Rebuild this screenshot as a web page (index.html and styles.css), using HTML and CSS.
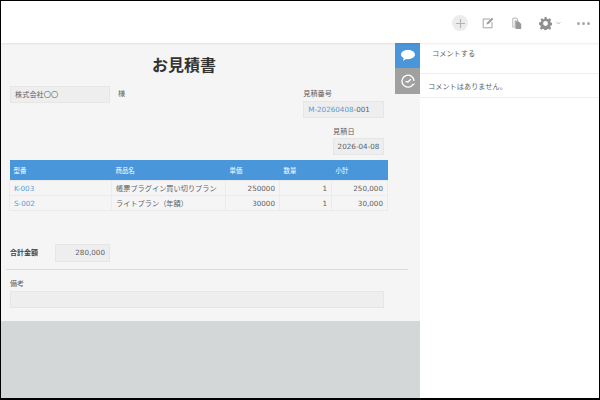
FILE: index.html
```html
<!DOCTYPE html>
<html lang="ja">
<head>
    <meta charset="UTF-8">
    <title>お見積書</title>
    <link rel="stylesheet" href="styles.css">
</head>
<body>
    <div class="frame">
        <header class="toolbar">
            <span class="icon add">
                <svg width="9" height="9" viewBox="0 0 10 10"><path d="M5 0v10M0 5h10" stroke="#b4b4b4" stroke-width="1.2" fill="none"/></svg>
            </span>
            <svg class="icon edit" width="12" height="12" viewBox="0 0 15 15" fill="none" stroke="#a0a0a0" stroke-width="1.2"><path d="M10 2.5H1.500v11h11V6"/><path d="M5.500 9.500l.6-2.400L12.300.9l1.800 1.800-6.200 6.200z" fill="#999" stroke="none"/></svg>
            <svg class="icon copy" width="10" height="13" viewBox="0 0 13 15"><path d="M1 .6h5.500l.8.8V4H4v8H1z" fill="none" stroke="#aaa" stroke-width="1.100"/><path d="M4.500 4.500h4l3.500 3.500v6.500H4.500z" fill="#999"/></svg>
            <svg class="icon gear" width="13" height="13" viewBox="0 0 24 24"><path d="M10 0h4l.6 3.300 2.300 1L19.700 2.400l2.800 2.800-1.900 2.800 1 2.300 3.400.7v4l-3.400.6-1 2.300 1.900 2.800-2.800 2.800-2.800-1.900-2.300 1-.6 3.400h-4l-.6-3.400-2.300-1-2.800 1.900-2.800-2.800 1.900-2.800-1-2.300L0 14v-4l3.400-.7 1-2.300L2.500 5.200l2.800-2.800 2.800 1.900 2.300-1zM12 7.500a4.500 4.500 0 1 0 0 9 4.500 4.500 0 0 0 0-9z" fill="#8f8f8f" fill-rule="evenodd"/></svg>
            <svg class="icon caret" width="5" height="4" viewBox="0 0 5 4"><path d="M.5 1l2 2 2-2" fill="none" stroke="#a8a8a8" stroke-width=".8"/></svg>
            <span class="icon more"><i></i><i></i><i></i></span>
        </header>
        <div class="main">
            <div class="left">
                <div class="sheet">
                    <div class="form">
                        <h1>お見積書</h1>
                        <div class="customer-row">
                            <div class="field customer">株式会社〇〇</div>
                            <span class="honorific">様</span>
                            <div class="quote-no">
                                <div class="label">見積番号</div>
                                <div class="field"><a>M-20260408</a>-001</div>
                            </div>
                        </div>
                        <div class="date-row">
                            <div class="label">見積日</div>
                            <div class="field date">2026-04-08</div>
                        </div>
                        <table class="items">
                            <colgroup>
                                <col class="c1"><col class="c2"><col class="c3"><col class="c4"><col class="c5">
                            </colgroup>
                            <thead>
                                <tr><th>型番</th><th>商品名</th><th>単価</th><th>数量</th><th>小計</th></tr>
                            </thead>
                            <tbody>
                                <tr><td><a>K-003</a></td><td>帳票プラグイン買い切りプラン</td><td class="num">250000</td><td class="num">1</td><td class="num">250,000</td></tr>
                                <tr><td><a>S-002</a></td><td>ライトプラン（年額）</td><td class="num">30000</td><td class="num">1</td><td class="num">30,000</td></tr>
                            </tbody>
                        </table>
                        <div class="total-row">
                            <span class="label bold">合計金額</span>
                            <div class="field total">280,000</div>
                        </div>
                        <hr>
                        <div class="label note-label">備考</div>
                        <div class="field note"></div>
                    </div>
                    <div class="tabs">
                        <div class="tab active">
                            <svg width="14" height="11" viewBox="0 0 14 11"><path d="M7 0c3.900 0 7 2 7 4.600S10.900 9.200 7 9.200c-.7 0-1.300 0-1.900-.2L2 11l.7-2.900C1 7.300 0 6 0 4.600 0 2 3.100 0 7 0z" fill="#fff"/></svg>
                        </div>
                        <div class="tab history">
                            <svg width="14" height="14" viewBox="0 0 14 14" fill="none" stroke="#fff" stroke-width="1.300"><path d="M12.300 10A6 6 0 1 1 13 7"/><path d="M4.500 7.500L7 8l3-3"/><path d="M13.500 9.500l-1 1.500-1.700-.8" stroke-width="1"/></svg>
                        </div>
                    </div>
                </div>
                <div class="below"></div>
            </div>
            <aside class="comments">
                <div class="comment-box">コメントする</div>
                <div class="comment-empty">コメントはありません。</div>
            </aside>
        </div>
    </div>
</body>
</html>
```

FILE: styles.css
```css
html, body {
    margin: 0;
    padding: 0;
}
body {
    font-family: "DejaVu Sans", "Noto Sans CJK JP", sans-serif;
    font-size: 7.2px;
    color: #5f5f5f;
    background: #fff;
}
.frame {
    box-sizing: border-box;
    width: 600px;
    height: 400px;
    border: 1px solid #000;
    border-bottom-width: 2px;
    display: flex;
    flex-direction: column;
    overflow: hidden;
}
.toolbar {
    flex: none;
    height: 42px;
    display: flex;
    align-items: center;
    padding-top: 2px;
    box-sizing: border-box;
    padding-left: 451px;
    box-shadow: 0 1px 2px rgba(0, 0, 0, 0.08);
    position: relative;
}
.icon {
    flex: none;
}
.add {
    width: 16px;
    height: 16px;
    border-radius: 50%;
    background: #ececec;
    display: flex;
    align-items: center;
    justify-content: center;
}
.edit {
    margin-left: 14px;
}
.copy {
    margin-left: 18px;
}
.gear {
    margin-left: 17px;
}
.caret {
    margin-left: 4px;
}
.more {
    margin-left: 16px;
    display: flex;
    gap: 2px;
}
.more i {
    width: 3px;
    height: 3px;
    border-radius: 50%;
    background: #a8a8a8;
}
.main {
    flex: 1;
    display: flex;
    min-height: 0;
}
.left {
    width: 419px;
    flex: none;
    display: flex;
    flex-direction: column;
    background: #d3d7d7;
}
.sheet {
    height: 278px;
    flex: none;
    display: flex;
    background: #f5f5f5;
}
.form {
    width: 394px;
    flex: none;
    box-sizing: border-box;
    padding: 0 0 0 9px;
}
h1 {
    margin: 0;
    padding-top: 12px;
    width: 348px;
    height: 31px;
    box-sizing: border-box;
    text-align: center;
    font-size: 16px;
    line-height: 22px;
    font-weight: 700;
    color: #333;
}
.customer-row {
    display: flex;
    height: 45px;
    padding-top: 1px;
    box-sizing: border-box;
    margin-top: 11px;
}
.field {
    box-sizing: border-box;
    height: 17px;
    line-height: 15px;
    background: #eee;
    border: 1px solid #e6e6e6;
    padding: 0 4px;
    white-space: nowrap;
}
.customer {
    width: 100px;
}
.honorific {
    margin-left: 8px;
    line-height: 16px;
}
.quote-no {
    margin-left: 178px;
    margin-top: 2px;
    width: 81px;
}
.label {
    line-height: 12px;
}
.quote-no .label {
    margin-bottom: 1px;
}
a {
    color: #5b9bd5;
}
.date-row {
    margin-left: 323px;
    width: 51px;
    margin-top: -4px;
}
.date {
    padding: 0 3px;
    text-align: center;
}
.items {
    margin: 5px 0 0 -1px;
    border-collapse: collapse;
    table-layout: fixed;
    width: 378px;
}
.c1 { width: 102px; }
.c2 { width: 114px; }
.c3 { width: 54px; }
.c4 { width: 52px; }
.c5 { width: 56px; }
.items th {
    height: 20px;
    padding: 0 4px;
    background: #4a96da;
    color: #fff;
    font-size: 6.4px;
    font-weight: 400;
    text-align: left;
}
.items td {
    height: 14px;
    padding: 0 4px;
    border: 1px solid #ebebeb;
    white-space: nowrap;
    line-height: 13px;
}
.items td.num {
    text-align: right;
}
.total-row {
    display: flex;
    align-items: center;
    margin-top: 33px;
}
.bold {
    width: 45px;
    font-size: 7px;
    font-weight: 700;
    color: #444;
}
.total {
    width: 55px;
    height: 18px;
    line-height: 16px;
    text-align: right;
    padding-right: 4px;
}
hr {
    margin: 7px 0 0 -4px;
    width: 402px;
    height: 1px;
    border: 0;
    background: #dcdcdc;
}
.note-label {
    margin-top: 8px;
    font-size: 7px;
}
.note {
    margin-top: 1px;
    width: 374px;
}
.tabs {
    width: 25px;
    flex: none;
}
.tab {
    height: 25px;
    background: #a0a0a0;
    display: flex;
    align-items: center;
    justify-content: center;
}
.tab.active {
    background: #4a96da;
}
.tab.history {
    height: 26px;
}
.comments {
    flex: 1;
    background: #fff;
}
.comment-box {
    height: 31px;
    box-sizing: border-box;
    padding: 5px 0 0 12px;
    line-height: 12px;
    border-bottom: 1px solid #eee;
}
.comment-empty {
    height: 24px;
    box-sizing: border-box;
    padding: 7px 0 0 8px;
    line-height: 12px;
    border-bottom: 1px solid #eee;
}
```
